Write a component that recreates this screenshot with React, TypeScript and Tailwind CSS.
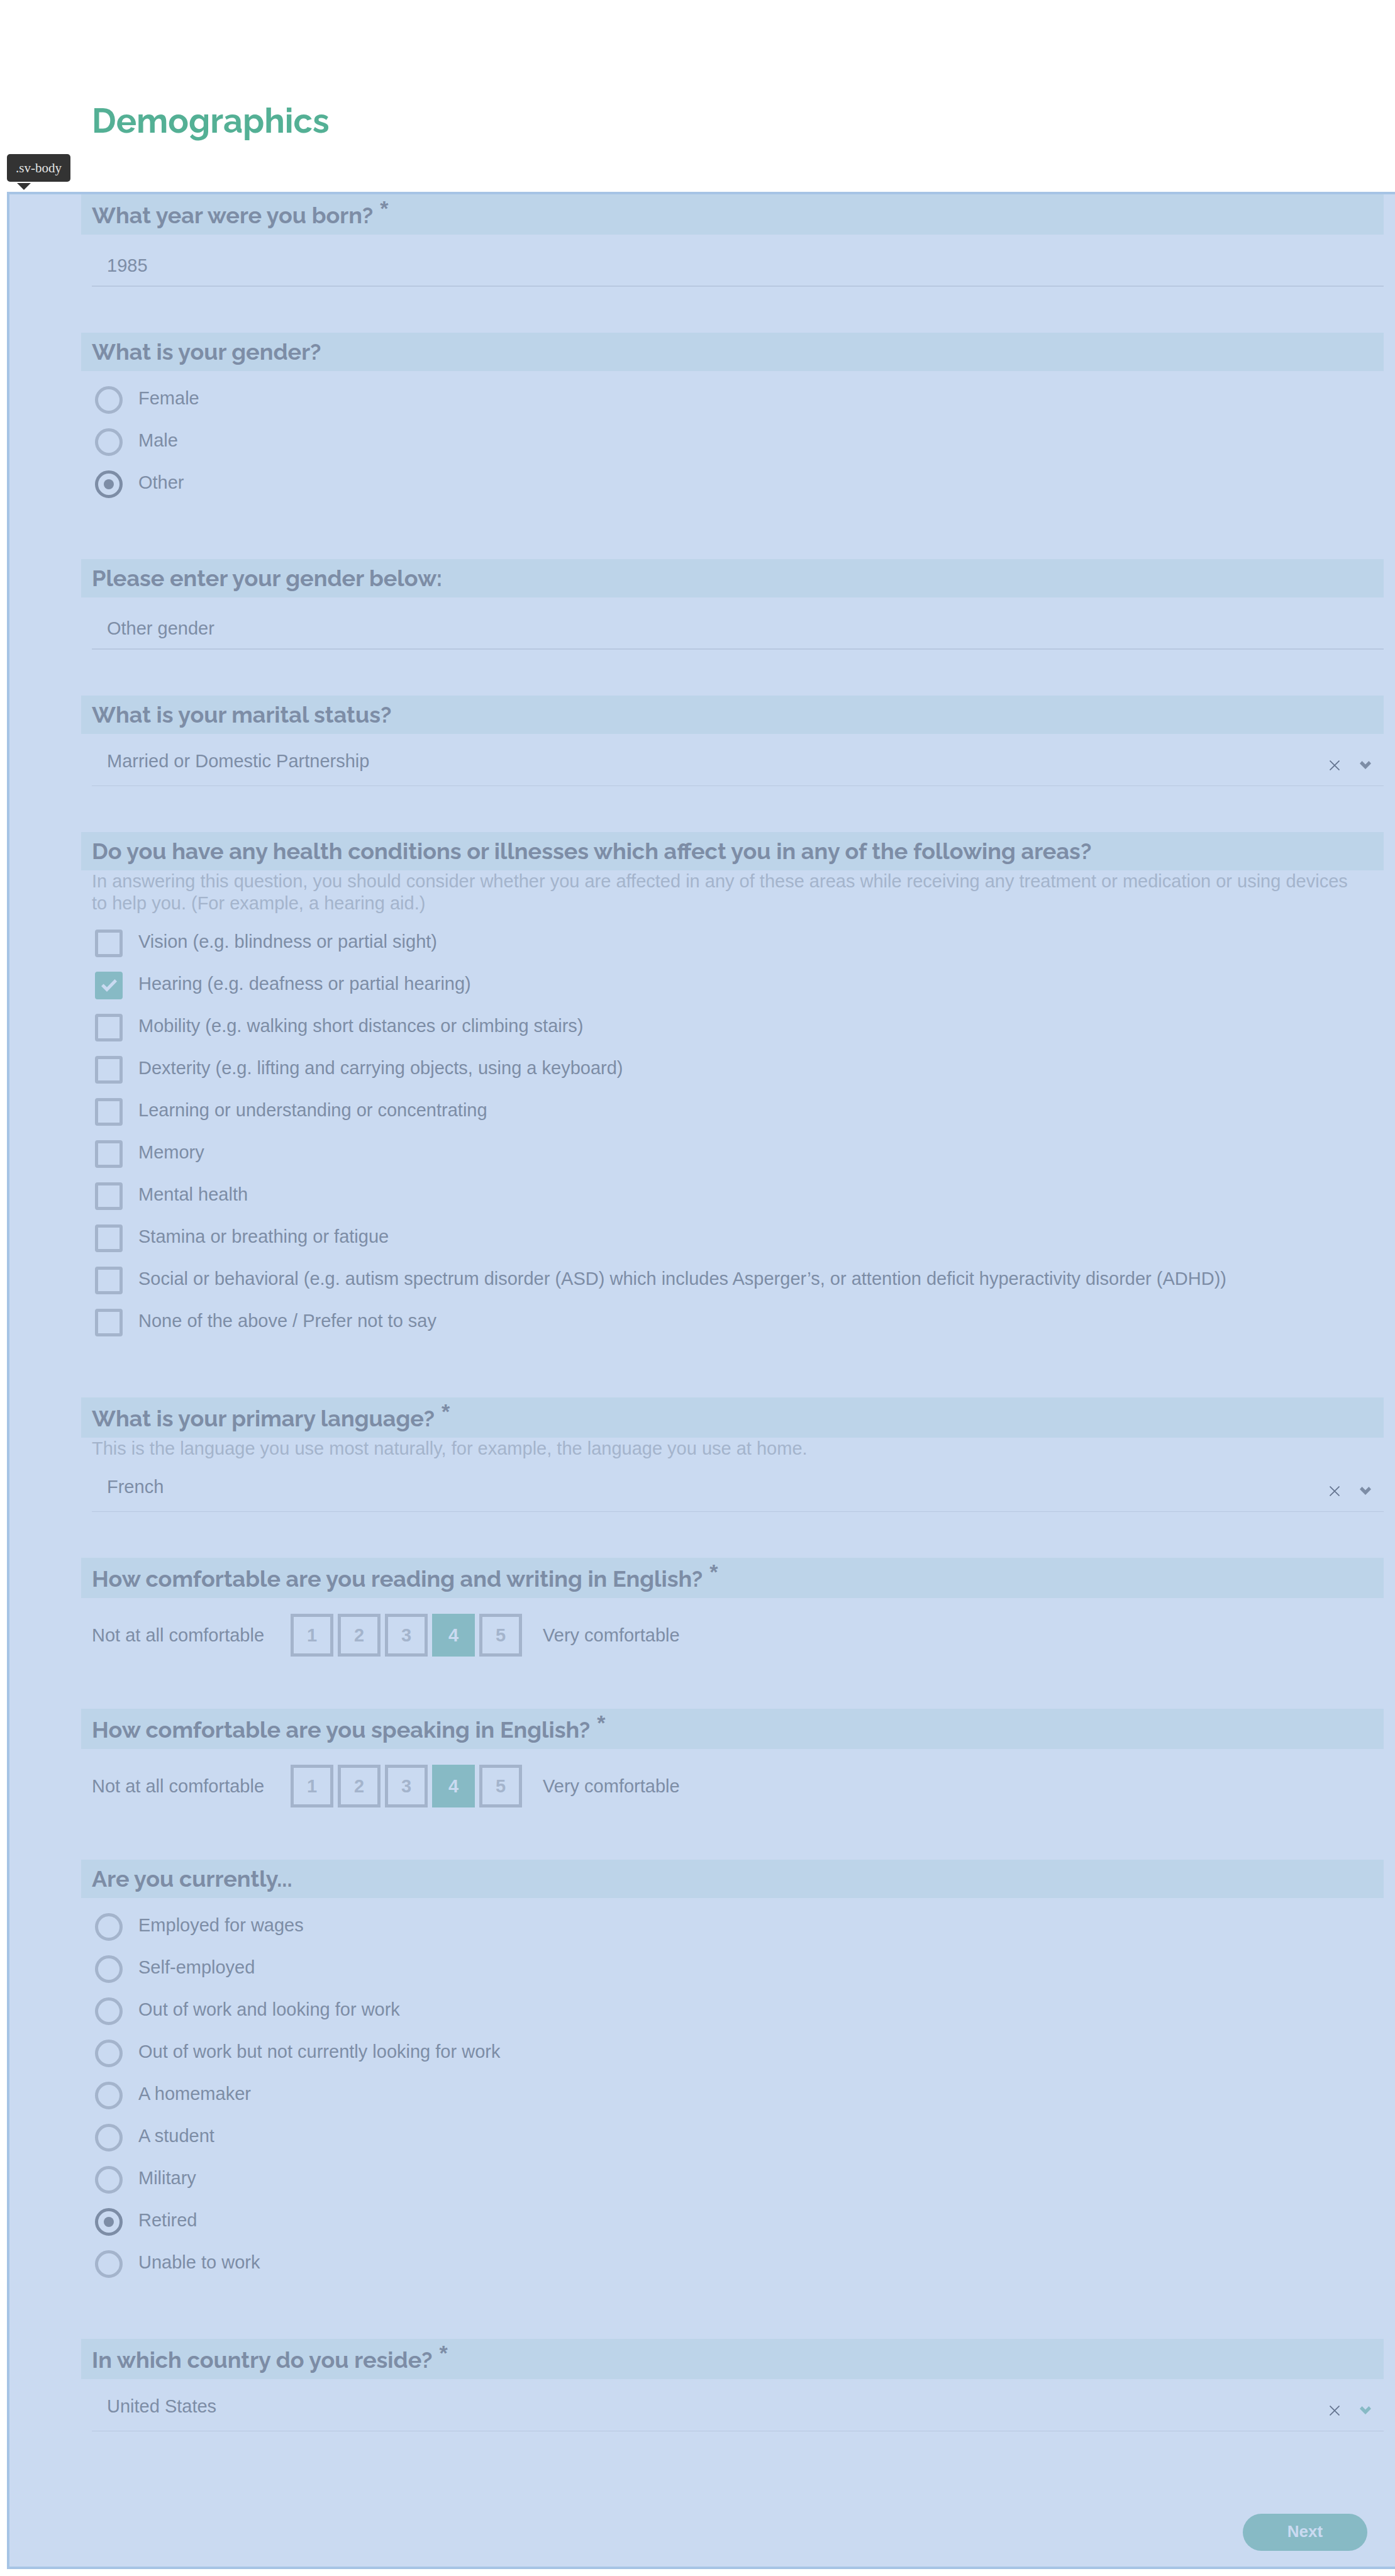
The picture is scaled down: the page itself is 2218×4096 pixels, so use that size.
import { useId, type ReactNode } from "react";

function Question({ title, required, note, htmlFor, id, children }: {
  title: string;
  required?: boolean;
  note?: string;
  htmlFor?: string;
  id?: string;
  children: ReactNode;
}) {
  return (
    <section>
      <h2
        id={id}
        className={
          "-ml-[17px] flex items-end gap-[11px] bg-[#bdd4e9] pl-[17px] font-['Raleway','Lato',sans-serif] text-[36px] font-bold leading-[61px] text-[#7d8da6] " +
          (required ? "h-[64px]" : "h-[61px]")
        }
      >
        {htmlFor ? <label htmlFor={htmlFor}>{title}</label> : <span>{title}</span>}
        {required && (
          <span className="self-start pt-[6px] font-['Liberation_Sans',sans-serif] text-[34px] leading-8">*</span>
        )}
      </h2>
      {note && <p className="pr-10 text-[#a4b4cc]">{note}</p>}
      {children}
    </section>
  );
}

function TextQuestion({ title, required, value }: { title: string; required?: boolean; value: string }) {
  const id = useId();
  return (
    <Question title={title} required={required} htmlFor={id}>
      <input
        id={id}
        type="text"
        defaultValue={value}
        className="mb-[73px] block h-[83px] w-full border-b-2 border-[#b8c8e0] bg-transparent px-6 pt-[18px] outline-none"
      />
    </Question>
  );
}

function SelectQuestion({ title, required, note, value, accent }: {
  title: string;
  required?: boolean;
  note?: string;
  value: string;
  accent?: boolean;
}) {
  const id = useId();
  return (
    <Question title={title} required={required} note={note} htmlFor={id}>
      <div className="relative mb-[73px]">
        <select
          id={id}
          defaultValue={value}
          className="block h-[83px] w-full appearance-none border-b border-[#b8c8e0] bg-transparent px-6 pt-1 outline-none"
        >
          <option>{value}</option>
        </select>
        <div className="pointer-events-none absolute inset-y-0 right-5 flex items-center gap-8 pt-4">
          <button type="button" aria-label="Clear" className="pointer-events-auto">
            <svg viewBox="0 0 16 16" className="size-4" fill="none" stroke="#62728d" strokeWidth="1.6">
              <path d="M.5.5l15 15M15.5.5l-15 15" />
            </svg>
          </button>
          <svg viewBox="0 0 18 13" className="h-[13px] w-[18px]" fill={accent ? "#87bac5" : "#7d8da6"}>
            <path d="M3.6 0L9 5.4 14.4 0 18 3.9 9 13 0 3.9z" />
          </svg>
        </div>
      </div>
    </Question>
  );
}

function ChoiceQuestion({ title, note, type, options, selected }: {
  title: string;
  note?: string;
  type: "radio" | "checkbox";
  options: string[];
  selected: string;
}) {
  const id = useId();
  return (
    <Question title={title} note={note} id={id}>
      <div role={type === "radio" ? "radiogroup" : "group"} aria-labelledby={id} className="flex flex-col gap-[23px] pb-[97px] pl-[5px] pt-6">
        {options.map((option) => (
          <label key={option} className="flex h-11 items-start gap-[25px] leading-[38px]">
            {type === "radio" ? (
              <input
                type="radio"
                name={id}
                defaultChecked={option === selected}
                className="grid size-11 shrink-0 appearance-none place-content-center rounded-full border-[5px] border-[#a4b4cc] before:size-4 before:rounded-full checked:border-[#7d8da6] checked:before:bg-[#7d8da6]"
              />
            ) : (
              <span className="grid size-11 shrink-0 place-items-center">
                <input
                  type="checkbox"
                  defaultChecked={option === selected}
                  className="peer col-start-1 row-start-1 size-11 appearance-none rounded-[4px] border-[5px] border-[#a4b4cc] checked:border-[#87bac5] checked:bg-[#87bac5]"
                />
                <svg viewBox="0 0 25 20" className="pointer-events-none col-start-1 row-start-1 hidden h-5 w-[25px] peer-checked:block" fill="#cadaf1">
                  <path d="M0 11L3.6 7.4 9 12.8 21.5 0 25 3.5 9 20z" />
                </svg>
              </span>
            )}
            <span>{option}</span>
          </label>
        ))}
      </div>
    </Question>
  );
}

function RatingQuestion({ title, selected }: { title: string; selected: number }) {
  const id = useId();
  return (
    <Question title={title} required id={id}>
      <div role="radiogroup" aria-labelledby={id} className="flex items-center pb-[83px] pt-[25px]">
        <span>Not at all comfortable</span>
        <div className="ml-[42px] mr-[33px] flex gap-[7px]">
          {[1, 2, 3, 4, 5].map((n) => (
            <label
              key={n}
              className="grid size-[68px] place-items-center border-[5px] border-[#a4b4cc] font-bold text-[#a4b4cc] has-checked:border-[#87bac5] has-checked:bg-[#87bac5] has-checked:text-[#cadaf1]"
            >
              <input type="radio" name={id} value={n} defaultChecked={n === selected} className="sr-only" />
              {n}
            </label>
          ))}
        </div>
        <span>Very comfortable</span>
      </div>
    </Question>
  );
}

export default function App() {
  return (
    <main className="bg-white pb-[11px] pl-[11px] font-['Liberation_Sans',Arial,sans-serif] text-[29px] leading-[35px] text-[#7d8da6]">
      <header className="pt-[157px]">
        <h1 className="pl-[135px] font-['Raleway','Lato',sans-serif] text-[54px] font-bold leading-[70px] text-[#54b095]">
          Demographics
        </h1>
        <div className="mb-[3px] mt-[18px] w-fit">
          <div className="rounded-[5px] bg-[#333] px-[14px] font-['Liberation_Serif',serif] text-[21px] leading-[44px] text-[#e4e4e4]">
            .sv-body
          </div>
          <svg viewBox="0 0 22 11" className="ml-4 mt-[2px] h-[11px] w-[22px]" fill="#333">
            <path d="M0 0h22L11 11z" />
          </svg>
        </div>
      </header>
      <form className="border-y-4 border-l-4 border-[#a6c4e5] bg-[#cadaf1] pl-[131px] pr-[18px]">
        <TextQuestion title="What year were you born?" required value="1985" />
        <ChoiceQuestion title="What is your gender?" type="radio" options={["Female", "Male", "Other"]} selected="Other" />
        <TextQuestion title="Please enter your gender below:" value="Other gender" />
        <SelectQuestion title="What is your marital status?" value="Married or Domestic Partnership" />
        <ChoiceQuestion
          title="Do you have any health conditions or illnesses which affect you in any of the following areas?"
          note="In answering this question, you should consider whether you are affected in any of these areas while receiving any treatment or medication or using devices to help you. (For example, a hearing aid.)"
          type="checkbox"
          options={[
            "Vision (e.g. blindness or partial sight)",
            "Hearing (e.g. deafness or partial hearing)",
            "Mobility (e.g. walking short distances or climbing stairs)",
            "Dexterity (e.g. lifting and carrying objects, using a keyboard)",
            "Learning or understanding or concentrating",
            "Memory",
            "Mental health",
            "Stamina or breathing or fatigue",
            "Social or behavioral (e.g. autism spectrum disorder (ASD) which includes Asperger’s, or attention deficit hyperactivity disorder (ADHD))",
            "None of the above / Prefer not to say",
          ]}
          selected="Hearing (e.g. deafness or partial hearing)"
        />
        <SelectQuestion
          title="What is your primary language?"
          required
          note="This is the language you use most naturally, for example, the language you use at home."
          value="French"
        />
        <RatingQuestion title="How comfortable are you reading and writing in English?" selected={4} />
        <RatingQuestion title="How comfortable are you speaking in English?" selected={4} />
        <ChoiceQuestion
          title="Are you currently..."
          type="radio"
          options={[
            "Employed for wages",
            "Self-employed",
            "Out of work and looking for work",
            "Out of work but not currently looking for work",
            "A homemaker",
            "A student",
            "Military",
            "Retired",
            "Unable to work",
          ]}
          selected="Retired"
        />
        <SelectQuestion title="In which country do you reside?" required value="United States" accent />
        <div className="flex justify-end pb-[25px] pr-[26px] pt-[58px]">
          <button type="button" className="h-[59px] w-[198px] rounded-full bg-[#87bac5] pb-[3px] text-[26px] font-bold text-[#cadaf1]">
            Next
          </button>
        </div>
      </form>
    </main>
  );
}
